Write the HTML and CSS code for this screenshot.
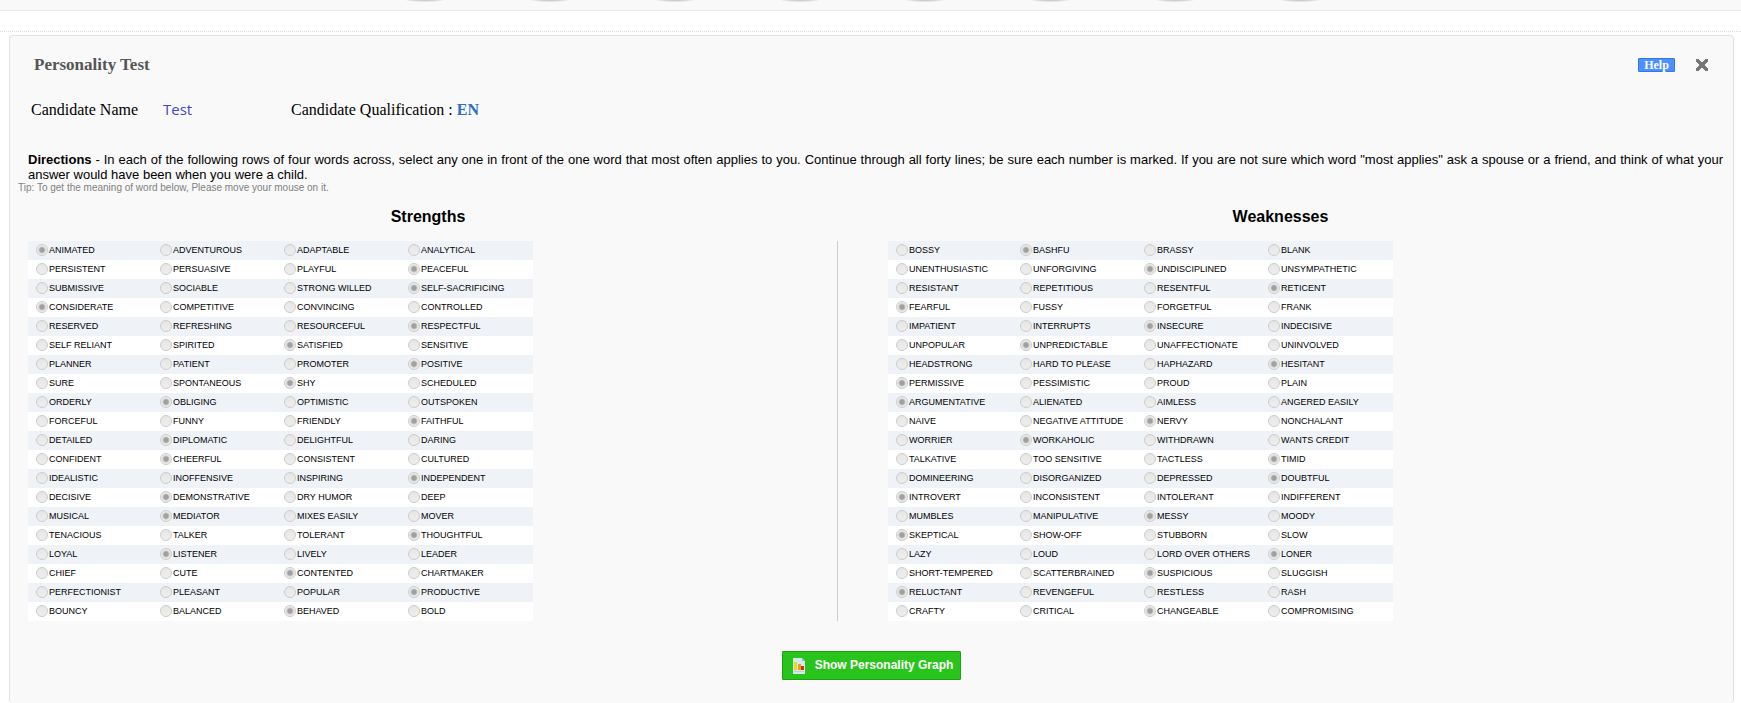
FILE: index.html
```html
<!DOCTYPE html>
<html lang="en">
<head>
  <meta charset="UTF-8"/>
  <meta name="viewport" content="width=device-width,initial-scale=1.0"/>
  <title>Personality Test</title>
  <link rel="stylesheet" href="styles.css">
</head>
<body>
  <div class="top-strip">
    <span class="dot"></span>
    <span class="dot"></span>
    <span class="dot"></span>
    <span class="dot"></span>
    <span class="dot"></span>
    <span class="dot"></span>
    <span class="dot"></span>
    <span class="dot"></span>
  </div>
  <div class="spacer"></div>

  <main class="panel">
    <div class="panel-header">
      <h1>Personality Test</h1>
      <button type="button" class="btn-help">Help</button>
      <button type="button" class="btn-close" aria-label="Close">
        <svg viewBox="0 0 12 12"><path d="M0 0h3v1h1v1h1v1h2V2h1V1h1V0h3v3h-1v1h-1v1H9v2h1v1h1v1h1v3H9v-1H8v-1H7V9H5v1H4v1H3v1H0V9h1V8h1V7h1V5H2V4H1V3H0z"/></svg>
      </button>
    </div>

    <div class="candidate">
      <span class="candidate-name">Candidate Name</span>
      <span class="candidate-value">Test</span>
      <span>Candidate Qualification : <b>EN</b></span>
    </div>

    <p class="directions"><b>Directions</b> - In each of the following rows of four words across, select any one in front of the one word that most often applies to you. Continue through all forty lines; be sure each number is marked. If you are not sure which word "most applies" ask a spouse or a friend, and think of what your answer would have been when you were a child.</p>
    <p class="tip">Tip: To get the meaning of word below, Please move your mouse on it.</p>

    <div class="columns">
      <section class="strengths">
        <h2>Strengths</h2>
        <div class="table-wrap">
          <table><tbody id="strengths"></tbody></table>
        </div>
      </section>
      <section class="weaknesses">
        <h2>Weaknesses</h2>
        <div class="table-wrap">
          <table><tbody id="weaknesses"></tbody></table>
        </div>
      </section>
    </div>

    <div class="actions">
      <button type="button" class="btn-graph">
        <svg viewBox="0 0 12 16">
          <path d="M0 0h9l3 3v13H0z" fill="#d5e8ee"/>
          <path d="M9 0v3h3z" fill="#8fb9a8"/>
          <path d="M1 4h3v8H1z" fill="#e8d820"/>
          <path d="M5 6h3v6H5z" fill="#ee9a1c"/>
          <path d="M8 8h3v4H8z" fill="#dc2a20"/>
          <path d="M1 13h10v1H1z" fill="#b9d3c4"/>
        </svg>
        <span>Show Personality Graph</span>
      </button>
    </div>
  </main>

  <script src="script.js"></script>
</body>
</html>
```
FILE: styles.css
```css
/* ===== Global & Body ===== */
* { margin: 0; padding: 0; box-sizing: border-box; }
body {
  font-family: 'Liberation Sans', Arial, sans-serif;
  background: #fff;
  color: #000;
}

/* ===== Top strip ===== */
.top-strip {
  display: flex;
  justify-content: center;
  gap: 85px;
  height: 11px;
  padding-right: 16px;
  background: #f9f9f9;
  border-bottom: 1px solid #ebebeb;
}
.dot {
  width: 40px;
  height: 2px;
  background: radial-gradient(ellipse 20px 2px at 50% 0, #c4c4c4, #d8d8d8 60%, #f9f9f9);
}
.spacer {
  height: 21px;
  border-bottom: 1px dotted #ddd;
}

/* ===== Panel ===== */
.panel {
  margin: 3px 7px 0 9px;
  padding-bottom: 23px;
  background: #f9f9f9;
  border: 1px solid #e3e3e3;
  border-bottom: none;
  border-radius: 4px;
}
.panel-header {
  display: flex;
  align-items: center;
  height: 58px;
  padding: 0 25px 0 24px;
}
.panel-header h1 {
  flex: 1;
  font: bold 17px 'Liberation Serif', 'Times New Roman', serif;
  color: #555;
}
.btn-help {
  width: 37px;
  height: 14px;
  margin-right: 21px;
  padding-bottom: 2px;
  font: bold 12px/12px 'Liberation Serif', 'Times New Roman', serif;
  color: #fff;
  background: #4d90fe;
  border: 1px solid #3079ed;
  border-radius: 1px;
  cursor: pointer;
}
.btn-close {
  width: 12px;
  height: 12px;
  background: none;
  border: none;
  cursor: pointer;
}
.btn-close svg { display: block; fill: #777; }

/* ===== Candidate ===== */
.candidate {
  display: flex;
  align-items: baseline;
  height: 32px;
  padding: 5px 0 0 21px;
  font: 16px 'Liberation Serif', 'Times New Roman', serif;
}
.candidate-name { width: 132px; }
.candidate-value {
  width: 128px;
  font-family: 'Open Sans', sans-serif;
  font-size: 15px;
  color: #4444cc;
}
.candidate b { color: #2a70c4; }

.directions {
  margin: 26px 10px 0 18px;
  font-size: 13px;
  line-height: 15px;
  text-align: justify;
}
.tip {
  margin-left: 8px;
  font-size: 10px;
  line-height: 12px;
  color: #808080;
}

/* ===== Word tables ===== */
.columns {
  display: grid;
  grid-template-columns: 809fr 887fr;
  margin: 0 9px 0 18px;
}
.columns h2 {
  padding: 14px 0 15px;
  font-size: 16px;
  line-height: 18px;
  text-align: center;
}
.strengths h2 { margin-right: 9px; }
.weaknesses .table-wrap {
  padding-left: 50px;
  border-left: 1px solid #ccc;
}
table {
  width: 505px;
  table-layout: fixed;
  border-collapse: collapse;
  background: #fff;
}
tr:nth-child(odd) { background: #eff3f8; }
td {
  width: 124px;
  height: 19px;
  padding-left: 8px;
  vertical-align: top;
}
td:last-child { width: 133px; }
td label {
  display: flex;
  align-items: center;
  gap: 1px;
  height: 18px;
  font-size: 9px;
  line-height: 12px;
  white-space: nowrap;
}
td input {
  appearance: none;
  flex: none;
  width: 12px;
  height: 12px;
  background: linear-gradient(#e6e6e6, #eee);
  border: 1px solid #ccc;
  border-radius: 50%;
}
td input:checked { background: radial-gradient(circle, #a0a0a0 2px, #ebebeb 4px); }

/* ===== Actions ===== */
.actions { padding-top: 30px; text-align: center; }
.btn-graph {
  display: inline-flex;
  align-items: center;
  gap: 10px;
  height: 29px;
  padding: 0 7px 0 10px;
  font: bold 12px 'Liberation Sans', Arial, sans-serif;
  color: #fff;
  background: #29c41b;
  border: 1px solid #1f9f14;
  border-radius: 1px;
  cursor: pointer;
}
.btn-graph svg { width: 12px; height: 16px; }
.btn-graph span { padding-bottom: 2px; }
```
FILE: script.js
```javascript
// each row: four words, the selected one is marked with *
const strengths = [
  '*ANIMATED,ADVENTUROUS,ADAPTABLE,ANALYTICAL',
  'PERSISTENT,PERSUASIVE,PLAYFUL,*PEACEFUL',
  'SUBMISSIVE,SOCIABLE,STRONG WILLED,*SELF-SACRIFICING',
  '*CONSIDERATE,COMPETITIVE,CONVINCING,CONTROLLED',
  'RESERVED,REFRESHING,RESOURCEFUL,*RESPECTFUL',
  'SELF RELIANT,SPIRITED,*SATISFIED,SENSITIVE',
  'PLANNER,PATIENT,PROMOTER,*POSITIVE',
  'SURE,SPONTANEOUS,*SHY,SCHEDULED',
  'ORDERLY,*OBLIGING,OPTIMISTIC,OUTSPOKEN',
  'FORCEFUL,FUNNY,FRIENDLY,*FAITHFUL',
  'DETAILED,*DIPLOMATIC,DELIGHTFUL,DARING',
  'CONFIDENT,*CHEERFUL,CONSISTENT,CULTURED',
  'IDEALISTIC,INOFFENSIVE,INSPIRING,*INDEPENDENT',
  'DECISIVE,*DEMONSTRATIVE,DRY HUMOR,DEEP',
  'MUSICAL,*MEDIATOR,MIXES EASILY,MOVER',
  'TENACIOUS,TALKER,TOLERANT,*THOUGHTFUL',
  'LOYAL,*LISTENER,LIVELY,LEADER',
  'CHIEF,CUTE,*CONTENTED,CHARTMAKER',
  'PERFECTIONIST,PLEASANT,POPULAR,*PRODUCTIVE',
  'BOUNCY,BALANCED,*BEHAVED,BOLD'
];

const weaknesses = [
  'BOSSY,*BASHFU,BRASSY,BLANK',
  'UNENTHUSIASTIC,UNFORGIVING,*UNDISCIPLINED,UNSYMPATHETIC',
  'RESISTANT,REPETITIOUS,RESENTFUL,*RETICENT',
  '*FEARFUL,FUSSY,FORGETFUL,FRANK',
  'IMPATIENT,INTERRUPTS,*INSECURE,INDECISIVE',
  'UNPOPULAR,*UNPREDICTABLE,UNAFFECTIONATE,UNINVOLVED',
  'HEADSTRONG,HARD TO PLEASE,HAPHAZARD,*HESITANT',
  '*PERMISSIVE,PESSIMISTIC,PROUD,PLAIN',
  '*ARGUMENTATIVE,ALIENATED,AIMLESS,ANGERED EASILY',
  'NAIVE,NEGATIVE ATTITUDE,*NERVY,NONCHALANT',
  'WORRIER,*WORKAHOLIC,WITHDRAWN,WANTS CREDIT',
  'TALKATIVE,TOO SENSITIVE,TACTLESS,*TIMID',
  'DOMINEERING,DISORGANIZED,DEPRESSED,*DOUBTFUL',
  '*INTROVERT,INCONSISTENT,INTOLERANT,INDIFFERENT',
  'MUMBLES,MANIPULATIVE,*MESSY,MOODY',
  '*SKEPTICAL,SHOW-OFF,STUBBORN,SLOW',
  'LAZY,LOUD,LORD OVER OTHERS,*LONER',
  'SHORT-TEMPERED,SCATTERBRAINED,*SUSPICIOUS,SLUGGISH',
  '*RELUCTANT,REVENGEFUL,RESTLESS,RASH',
  'CRAFTY,CRITICAL,*CHANGEABLE,COMPROMISING'
];

function fillTable(id, rows) {
  document.getElementById(id).innerHTML = rows.map((row, i) => {
    const cells = row.split(',').map(word => {
      const checked = word.startsWith('*') ? ' checked' : '';
      return `<td><label><input type="radio" name="${id}-${i + 1}" disabled${checked}>${word.replace('*', '')}</label></td>`;
    });
    return `<tr>${cells.join('')}</tr>`;
  }).join('');
}

fillTable('strengths', strengths);
fillTable('weaknesses', weaknesses);
```
